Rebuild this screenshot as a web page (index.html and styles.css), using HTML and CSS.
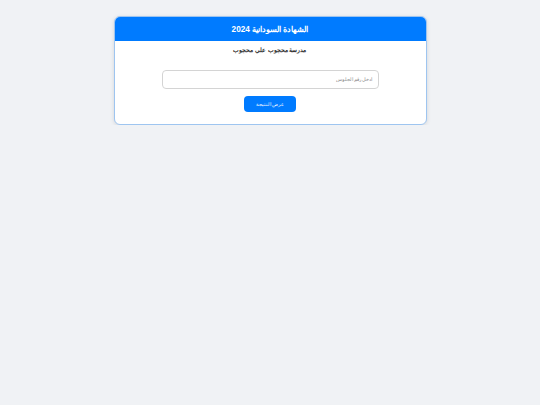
FILE: index.html
```html
<!DOCTYPE html>
<html lang="ar" dir="rtl">
<head>
    <meta charset="UTF-8">
    <meta name="viewport" content="width=device-width, initial-scale=1.0">
    <title>الشهادة السودانية 2024</title>
    <link rel="stylesheet" href="styles.css">
</head>
<body>
    <div class="card">
        <div class="header">الشهادة السودانية 2024</div>
        <p class="school">مدرسة محجوب علي محجوب</p>
        <div class="form">
            <input class="input" type="text" placeholder="ادخل رقم الجلوس">
            <button class="btn">عرض النتيجة</button>
        </div>
    </div>
</body>
</html>
```

FILE: styles.css
```css
* {
    margin: 0;
    padding: 0;
    box-sizing: border-box;
}
body {
    background-color: #f0f2f5;
    font-family: "Liberation Sans", Arial, sans-serif;
    padding-top: 16px;
}
.card {
    width: 313px;
    margin: 0 auto;
    background-color: white;
    border: 1px solid #9ec5f0;
    border-radius: 6px;
    box-shadow: 0 1px 4px rgba(0, 0, 0, 0.12);
    overflow: hidden;
    padding-bottom: 12px;
}
.header {
    background-color: #007bff;
    color: white;
    height: 24px;
    display: flex;
    justify-content: center;
    align-items: center;
    font-size: 8.2px;
    font-weight: bold;
}
.school {
    text-align: center;
    font-size: 6px;
    font-weight: bold;
    color: #333;
    margin-top: 5px;
}
.form {
    display: flex;
    flex-direction: column;
    align-items: center;
    margin-top: 17px;
}
.input {
    width: 217px;
    height: 19px;
    border: 1px solid #d4d4d4;
    border-radius: 4px;
    padding: 0 5px;
    font-size: 4.8px;
    font-family: "Liberation Sans", Arial, sans-serif;
}
.input::placeholder {
    color: #888;
}
.btn {
    margin-top: 7px;
    width: 52px;
    height: 16px;
    background-color: #007bff;
    color: white;
    border: none;
    border-radius: 4px;
    font-size: 5.3px;
    font-family: "Liberation Sans", Arial, sans-serif;
}
```
